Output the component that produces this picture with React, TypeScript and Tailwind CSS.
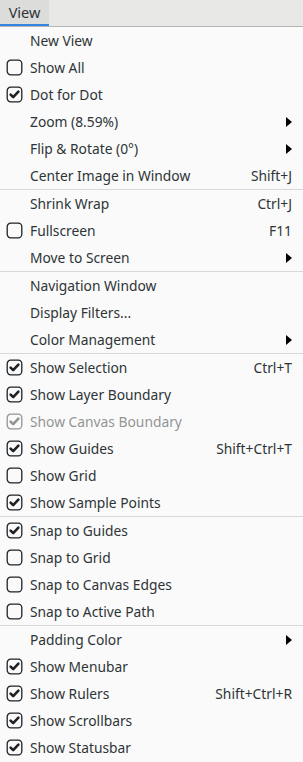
import { Fragment } from 'react';

type Item = {
  label: string;
  check?: boolean; // undefined = no checkbox
  shortcut?: string;
  submenu?: boolean;
  disabled?: boolean;
};

const groups: Item[][] = [
  [
    { label: 'New View' },
    { label: 'Show All', check: false },
    { label: 'Dot for Dot', check: true },
    { label: 'Zoom (8.59%)', submenu: true },
    { label: 'Flip & Rotate (0°)', submenu: true },
    { label: 'Center Image in Window', shortcut: 'Shift+J' },
  ],
  [
    { label: 'Shrink Wrap', shortcut: 'Ctrl+J' },
    { label: 'Fullscreen', check: false, shortcut: 'F11' },
    { label: 'Move to Screen', submenu: true },
  ],
  [
    { label: 'Navigation Window' },
    { label: 'Display Filters...' },
    { label: 'Color Management', submenu: true },
  ],
  [
    { label: 'Show Selection', check: true, shortcut: 'Ctrl+T' },
    { label: 'Show Layer Boundary', check: true },
    { label: 'Show Canvas Boundary', check: true, disabled: true },
    { label: 'Show Guides', check: true, shortcut: 'Shift+Ctrl+T' },
    { label: 'Show Grid', check: false },
    { label: 'Show Sample Points', check: true },
  ],
  [
    { label: 'Snap to Guides', check: true },
    { label: 'Snap to Grid', check: false },
    { label: 'Snap to Canvas Edges', check: false },
    { label: 'Snap to Active Path', check: false },
  ],
  [
    { label: 'Padding Color', submenu: true },
    { label: 'Show Menubar', check: true },
    { label: 'Show Rulers', check: true, shortcut: 'Shift+Ctrl+R' },
    { label: 'Show Scrollbars', check: true },
    { label: 'Show Statusbar', check: true },
  ],
];

function CheckBox({ checked, disabled }: { checked: boolean; disabled?: boolean }) {
  const color = disabled ? '#929595' : '#1e2224';
  return (
    <svg width="17" height="17" viewBox="0 0 17 17" className="shrink-0">
      <rect x="1.2" y="1.2" width="14.6" height="14.6" rx="3.5" fill="none" stroke={color} strokeWidth="1.3" />
      {checked && (
        <path d="M4.6 8.6 L7.2 11.2 L12.4 5.6" fill="none" stroke={color} strokeWidth="2.6" strokeLinecap="round" strokeLinejoin="round" />
      )}
    </svg>
  );
}

function MenuRow({ item }: { item: Item }) {
  return (
    <div className={`flex h-[27px] items-center pr-[11px] ${item.disabled ? 'text-[#929595]' : 'text-[#2e3436]'}`}>
      <div className="flex w-[30px] shrink-0 justify-start pl-[6px]">
        {item.check !== undefined && <CheckBox checked={item.check} disabled={item.disabled} />}
      </div>
      <span className="flex-1 whitespace-nowrap">{item.label}</span>
      {item.shortcut && <span className="whitespace-nowrap">{item.shortcut}</span>}
      {item.submenu && (
        <svg width="6" height="10" viewBox="0 0 6 10">
          <path d="M0 0 L6 5 L0 10 Z" fill="#000" />
        </svg>
      )}
    </div>
  );
}

export default function App() {
  return (
    <div className="h-[762px] w-[303px] overflow-hidden bg-[#fafafa] text-[13.8px] leading-none" style={{ fontFamily: '"Noto Sans", "Open Sans", sans-serif' }}>
      <div className="flex h-[27px] border-b border-[#b6b6b3] bg-[#e8e8e7]">
        <div className="flex h-[26px] w-[49px] items-center justify-center border-b-2 border-[#3584e4] bg-[#dcdcdb] text-[14.5px] text-[#2e3436]">
          View
        </div>
      </div>
      <div>
        {groups.map((g, i) => (
          <Fragment key={i}>
            {i > 0 && <div className="h-px bg-[#d8d8d6]" />}
            {g.map((item) => (
              <MenuRow key={item.label} item={item} />
            ))}
          </Fragment>
        ))}
      </div>
    </div>
  );
}
